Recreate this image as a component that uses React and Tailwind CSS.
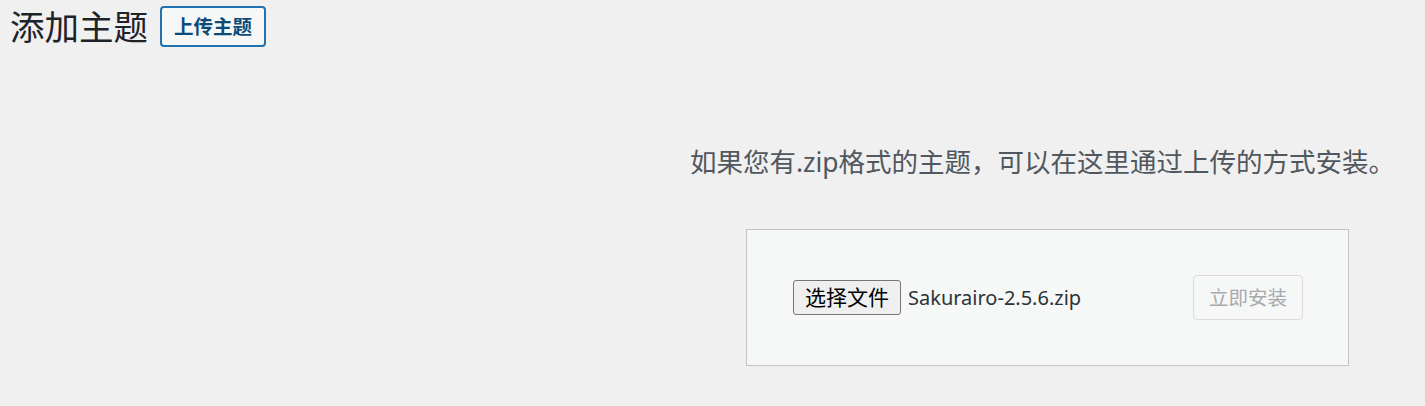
export default function App() {
  return (
    <div
      className="min-h-screen bg-[#f0f0f1] text-[#1d2327]"
      style={{ fontFamily: '"Noto Sans", "Noto Sans CJK SC", sans-serif' }}
    >
      {/* Header */}
      <div className="flex items-center pl-[10px] pt-[6px]">
        <h1 className="text-[34.5px] leading-[41px] font-normal text-[#1d2327]">添加主题</h1>
        <button className="ml-[12px] h-[41px] px-[12px] rounded-[4px] border-2 border-[#2271b1] bg-[#f6f7f7] text-[19.5px] font-bold text-[#0a4b78] leading-none">
          上传主题
        </button>
      </div>

      {/* Upload */}
      <div className="ml-[746px] w-[603px] flex flex-col items-center pt-[97px]">
        <p className="whitespace-nowrap text-[26.5px] leading-[36px] text-[#50575e] -translate-x-[5px]">
          如果您有.zip格式的主题，可以在这里通过上传的方式安装。
        </p>
        <div className="mt-[49px] w-full h-[137px] border border-[#c3c4c7] bg-[#f6f7f7] flex items-center justify-between pl-[46px] pr-[45px]">
          <div className="flex items-center">
            <span className="h-[35px] px-[11px] flex items-center border border-[#767676] rounded-[3px] bg-[#efefef] text-[21px] text-black leading-none">
              选择文件
            </span>
            <span className="ml-[7px] text-[20px] text-[#2c3338]">Sakurairo-2.5.6.zip</span>
          </div>
          <button
            disabled
            className="h-[45px] px-[15px] rounded-[4px] border border-[#dcdcde] bg-[#f6f7f7] text-[19.5px] text-[#a7aaad] leading-none"
          >
            立即安装
          </button>
        </div>
      </div>
    </div>
  );
}
